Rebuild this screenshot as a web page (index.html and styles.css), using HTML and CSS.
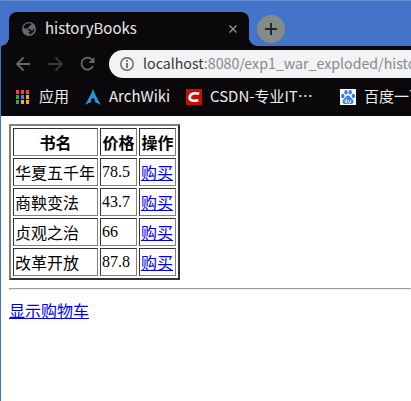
FILE: index.html
```html
<!DOCTYPE html>
<html lang="zh-CN">
<head>
<meta charset="utf-8">
<title>historyBooks</title>
<link rel="stylesheet" href="styles.css">
</head>
<body>
<div class="window">
  <div class="tabstrip">
    <div class="tab">
      <svg class="globe" width="14" height="14" viewBox="0 0 14 14"><circle cx="7" cy="7" r="7" fill="#64686c"/><path d="M5 1.6h4.3l-.2 1.5-1.7.8-.6 1.5-1.8.4.3 1.2h2.8l1.2 1.5 1.4-.1.7-1.4 1-.2c-.1 2.9-2.2 5.2-5.4 5.400l-.2-1.5 1.1-1-.3-1.2-2-.4-1.1-1.5-2.8-.3C1.600 4 3 2.300 5 1.600z" fill="#0b080b"/></svg>
      <span class="title">historyBooks</span>
      <svg class="close" width="8" height="8" viewBox="0 0 8 8"><path d="M.5.5l7 7M7.500.5l-7 7" stroke="#929294" stroke-width="1.4"/></svg>
    </div>
    <div class="newtab"><svg width="12" height="12" viewBox="0 0 12 12"><path d="M6 0v12M0 6h12" stroke="#24282a" stroke-width="2"/></svg></div>
  </div>
  <div class="toolbar">
    <svg class="nav" width="96" height="28" viewBox="0 0 96 28" fill="none" stroke-width="1.8"><path d="M29 14H16.500M22.500 7.500L16 14l6.500 6.500" stroke="#68686b"/><path d="M47 14h13.500M54.500 7.500L61 14l-6.500 6.500" stroke="#39393b"/><path d="M91.500 10.300A6 6 0 1 0 92 16" stroke="#68686b"/><path d="M93.500 7v6h-6z" fill="#68686b"/></svg>
    <div class="omnibox">
      <svg width="14" height="14" viewBox="0 0 14 14"><circle cx="7" cy="7" r="6.2" fill="none" stroke="#5f6368" stroke-width="1.4"/><path d="M7 3v1.700M7 6v5" stroke="#5f6368" stroke-width="1.7"/></svg>
      <span class="url"><b>localhost</b>:8080/exp1_war_exploded/histo</span>
    </div>
  </div>
  <div class="bookmarks">
    <svg class="apps" width="13" height="14" viewBox="0 0 13 14"><path d="M0 0h3v4H0zM5 0h3v4H5zM10 0h3v4h-3z" fill="#f44336"/><path d="M0 5h3v4H0zM0 10h3v4H0z" fill="#35a257"/><path d="M5 5h3v4H5z" fill="#3b86f6"/><path d="M10 5h3v4h-3zM5 10h3v4H5zM10 10h3v4h-3z" fill="#f9b018"/></svg>
    <span class="label apps-label">应用</span>
    <svg class="arch" width="16" height="16" viewBox="0 0 16 16"><path d="M8 0C7 3 4 9.500 0 16c2.500-1.500 4-2.100 5.900-2.500 0-3 .8-4.500 2.100-4.500s2.100 1.500 2.100 4.500c1.900.4 3.400 1 5.900 2.500C12 9.500 9 3 8 0z" fill="#2697d3"/></svg>
    <span class="label arch-label">ArchWiki</span>
    <svg class="csdn" width="16" height="16" viewBox="0 0 16 16"><path d="M0 0h16v16H0z" fill="#ca0c05"/><path d="M13.200 4.800C9 3.700 4.500 4.200 3.700 8c-.8 4 4.300 4.200 8.600 3.200" fill="none" stroke="#fff" stroke-width="2.600"/></svg>
    <span class="label csdn-label">CSDN-专业IT⋯</span>
    <svg class="baidu" width="16" height="16" viewBox="0 0 16 16"><path d="M0 0h16v16H0z" fill="#fff"/><g fill="#347cf2"><ellipse cx="2.800" cy="7" rx="1.700" ry="2.200"/><ellipse cx="6" cy="3.200" rx="1.700" ry="2.300"/><ellipse cx="10.200" cy="3.200" rx="1.700" ry="2.300"/><ellipse cx="13.400" cy="7" rx="1.700" ry="2.200"/><path d="M8 6.500c2 0 2.500 2 4 3.300 2.600 2.400 1.500 5.400-1 5.200-2-.2-4-.2-6 0-2.500.2-3.600-2.800-1-5.200C5.500 8.500 6 6.500 8 6.500z"/></g><path d="M6.800 9.500v4H5.200v-2.300h1.600M8.700 11v2.500h2V11" fill="none" stroke="#fff" stroke-width=".8"/></svg>
    <span class="label baidu-label">百度一下</span>
  </div>
  <main class="page">
    <table>
      <colgroup><col class="name"><col class="price"><col class="action"></colgroup>
      <tr><th>书名</th><th>价格</th><th>操作</th></tr>
      <tr><td>华夏五千年</td><td class="num">78.5</td><td><a href="#">购买</a></td></tr>
      <tr><td>商鞅变法</td><td class="num">43.7</td><td><a href="#">购买</a></td></tr>
      <tr><td>贞观之治</td><td class="num">66</td><td><a href="#">购买</a></td></tr>
      <tr><td>改革开放</td><td class="num">87.8</td><td><a href="#">购买</a></td></tr>
    </table>
    <hr>
    <a class="cart" href="#">显示购物车</a>
  </main>
</div>
</body>
</html>
```
FILE: styles.css
```css
* { box-sizing: border-box; }
body { margin: 0; overflow: hidden; background: #fff; }
svg { display: block; flex: none; }
.window {
  height: 401px;
  border-left: 1px solid #4474c9;
  overflow: hidden;
  font-family: "Noto Sans CJK SC", sans-serif;
}
.tabstrip {
  display: flex;
  height: 46px;
  padding: 11px 0 0 8px;
  background: #4474c9;
  border-top: 1px solid #6b91d5;
}
.tab {
  position: relative;
  display: flex;
  align-items: center;
  width: 240px;
  height: 34px;
  padding: 0 12px 0 13px;
  border-radius: 8px 8px 0 0;
  background: #0b080b;
}
.tab::before, .tab::after {
  content: "";
  position: absolute;
  bottom: 0;
  width: 8px;
  height: 8px;
}
.tab::before { left: -8px; background: radial-gradient(circle at 0 0, transparent 7.5px, #0b080b 8px); }
.tab::after { right: -8px; background: radial-gradient(circle at 100% 0, transparent 7.5px, #0b080b 8px); }
.title { margin-left: 9px; flex: 1; font-size: 15px; line-height: 32px; height: 34px; color: #e6e6e7; }
.newtab {
  display: flex;
  align-items: center;
  justify-content: center;
  width: 28px;
  height: 28px;
  margin: 3px 0 0 8px;
  border-radius: 50%;
  background: #858b89;
}
.toolbar { display: flex; height: 36px; padding-top: 4px; background: #0b080b; }
.nav { margin-right: 12px; }
.omnibox {
  display: flex;
  align-items: center;
  flex: 1;
  height: 28px;
  padding-left: 11px;
  border-radius: 14px 0 0 14px;
  background: #f1f3f4;
  overflow: hidden;
}
.url { margin-left: 9px; font-size: 14.2px; line-height: 26px; height: 28px; white-space: nowrap; color: #85898d; }
.url b { font-weight: 400; color: #333638; }
.bookmarks {
  display: flex;
  align-items: center;
  height: 34px;
  padding: 0 0 4px 15px;
  background: #0b080b;
  overflow: hidden;
}
.label { flex: none; font-size: 15px; line-height: 28px; height: 30px; white-space: nowrap; color: #ededee; }
.apps-label { width: 46px; margin-left: 10px; }
.arch-label { width: 77px; margin-left: 8px; }
.csdn-label { width: 130px; margin-left: 8px; }
.baidu-label { margin-left: 8px; }
.page {
  padding: 8px 0 0 8px;
  font-family: "Liberation Serif", "Noto Sans CJK SC", serif;
  font-size: 16px;
  color: #000;
}
table {
  width: 171px;
  height: 156px;
  table-layout: fixed;
  border: 2px solid;
  border-color: #808080 #333 #333 #808080;
  border-spacing: 2px;
}
.name { width: 85px; }
.price, .action { width: 37px; }
th, td {
  height: 28px;
  padding: 3px 1px 0;
  border: 1px solid;
  border-color: #333 #808080 #808080 #333;
  line-height: 23px;
  white-space: nowrap;
}
.num { padding: 2px 1px 3px; line-height: 21px; }
a { color: #0000ee; }
hr { margin: 8px 0; }
.cart { display: block; padding-top: 2px; line-height: 24px; }
```
